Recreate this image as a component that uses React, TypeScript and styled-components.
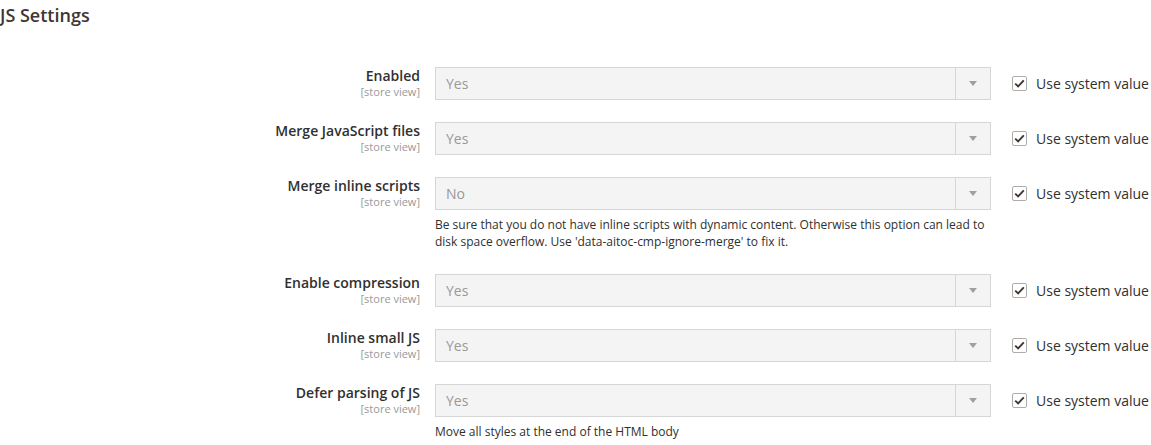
import React from "react";
import styled, { createGlobalStyle } from "styled-components";

type Row = {
  label: string;
  value: string;
  note?: string;
};

const ROWS: Row[] = [
  { label: "Enabled", value: "Yes" },
  { label: "Merge JavaScript files", value: "Yes" },
  {
    label: "Merge inline scripts",
    value: "No",
    note:
      "Be sure that you do not have inline scripts with dynamic content. Otherwise this option can lead to disk space overflow. Use 'data-aitoc-cmp-ignore-merge' to fix it."
  },
  { label: "Enable compression", value: "Yes" },
  { label: "Inline small JS", value: "Yes" },
  {
    label: "Defer parsing of JS",
    value: "Yes",
    note: "Move all styles at the end of the HTML body"
  }
];

const GlobalStyle = createGlobalStyle`
  html, body {
    margin: 0;
    padding: 0;
    background: #fff;
  }
  body {
    font-family: "Open Sans", "Liberation Sans", sans-serif;
    color: #303030;
  }
`;

export default function App() {
  return (
    <>
      <GlobalStyle />
      <Section>
        <Title>JS Settings</Title>
        <Fields>
          {ROWS.map((row) => (
            <Field key={row.label}>
              <Label>
                <LabelText>{row.label}</LabelText>
                <Scope>[store view]</Scope>
              </Label>
              <Control>
                <Select>
                  <SelectValue>{row.value}</SelectValue>
                  <SelectArrow>
                    <svg width="8" height="5" viewBox="0 0 8 5">
                      <path d="M0 0h8L4 5z" fill="#a0a0a0" />
                    </svg>
                  </SelectArrow>
                </Select>
                {row.note && <Note>{row.note}</Note>}
              </Control>
              <UseDefault>
                <Checkbox>
                  <svg width="11" height="9" viewBox="0 0 11 9">
                    <path
                      d="M1.2 4.6l2.9 2.8L9.8 1.4"
                      fill="none"
                      stroke="#41362f"
                      strokeWidth="1.9"
                    />
                  </svg>
                </Checkbox>
                <UseDefaultText>Use system value</UseDefaultText>
              </UseDefault>
            </Field>
          ))}
        </Fields>
      </Section>
    </>
  );
}

const Section = styled.div`
  width: 1151px;
`;

const Title = styled.h3`
  margin: 0;
  padding-top: 4px;
  font-size: 18px;
  line-height: 22px;
  font-weight: 600;
  color: #41362f;
`;

const Fields = styled.div`
  margin-top: 41px;
  display: flex;
  flex-direction: column;
  gap: 22px;
`;

const Field = styled.div`
  display: grid;
  grid-template-columns: 420px 556px auto;
  column-gap: 15px;
  align-items: start;

  & > :nth-child(3) {
    margin-left: 6px;
  }
`;

const Label = styled.div`
  display: flex;
  flex-direction: column;
  align-items: flex-end;
  text-align: right;
`;

const LabelText = styled.span`
  font-size: 14px;
  line-height: 18px;
  font-weight: 600;
  color: #303030;
`;

const Scope = styled.span`
  font-size: 11px;
  line-height: 13px;
  color: #999;
`;

const Control = styled.div`
  display: flex;
  flex-direction: column;
`;

const Select = styled.div`
  height: 33px;
  box-sizing: border-box;
  display: flex;
  align-items: stretch;
  background: #f4f4f4;
  border: 1px solid #d6d6d6;
`;

const SelectValue = styled.div`
  flex: 1;
  display: flex;
  align-items: center;
  padding-left: 10px;
  font-size: 14px;
  color: #999;
`;

const SelectArrow = styled.div`
  width: 34px;
  display: flex;
  align-items: center;
  justify-content: center;
  border-left: 1px solid #d6d6d6;
`;

const Note = styled.div`
  padding: 6px 0 2px;
  font-size: 12px;
  line-height: 17px;
  color: #303030;
`;

const UseDefault = styled.div`
  height: 33px;
  display: flex;
  align-items: center;
  gap: 9px;
`;

const Checkbox = styled.span`
  width: 15px;
  height: 15px;
  box-sizing: border-box;
  border: 1px solid #adadad;
  border-radius: 2px;
  background: #fff;
  display: flex;
  align-items: center;
  justify-content: center;
`;

const UseDefaultText = styled.span`
  font-size: 14px;
  color: #303030;
`;
